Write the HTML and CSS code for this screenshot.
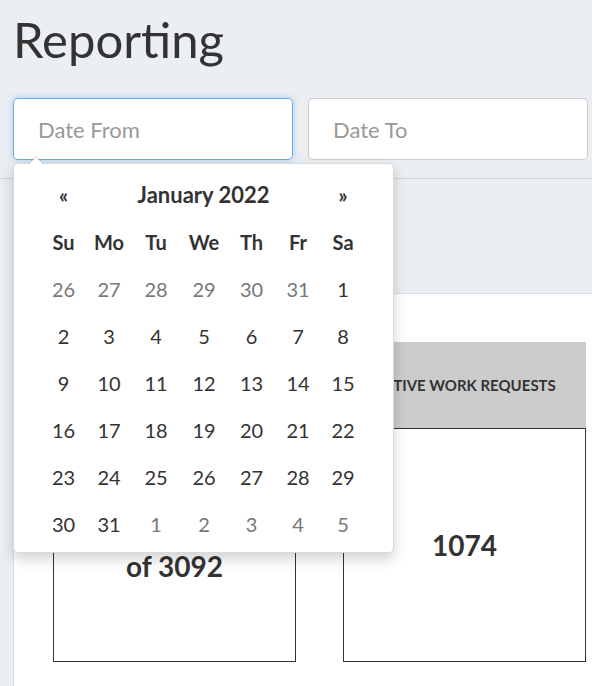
FILE: index.html
```html
<!DOCTYPE html>
<html lang="en">
<head>
  <meta charset="UTF-8">
  <meta name="viewport" content="width=device-width, initial-scale=1.0">
  <title>Reporting</title>
  <link rel="stylesheet" href="styles.css">
</head>
<body>
  <div class="top">
    <h1>Reporting</h1>

    <div class="date-row">
      <input type="text" class="date-input focused" placeholder="Date From" autofocus>
      <input type="text" class="date-input" placeholder="Date To">

      <div class="datepicker">
        <table class="cal">
          <colgroup>
            <col style="width:45px"><col style="width:46px"><col style="width:48px"><col style="width:48px">
            <col style="width:47px"><col style="width:46px"><col style="width:44px">
          </colgroup>
          <thead>
            <tr>
              <th class="nav">&laquo;</th>
              <th class="month" colspan="5">January 2022</th>
              <th class="nav">&raquo;</th>
            </tr>
            <tr class="dow">
              <th>Su</th><th>Mo</th><th>Tu</th><th>We</th><th>Th</th><th>Fr</th><th>Sa</th>
            </tr>
          </thead>
          <tbody id="cal-body"></tbody>
        </table>
      </div>
    </div>
  </div>

  <div class="rule"></div>

  <div class="panel">
    <div class="cards">
      <div class="card">
        <div class="card-head">COMPLETED</div>
        <div class="card-body">
          <div class="value two-line">2018<br>of 3092</div>
        </div>
      </div>
      <div class="card">
        <div class="card-head">ACTIVE WORK REQUESTS</div>
        <div class="card-body">
          <div class="value">1074</div>
        </div>
      </div>
    </div>
  </div>

  <script>
    // January 2022 starts on a Saturday; fill 6 weeks from Dec 26
    const body = document.getElementById('cal-body');
    const start = new Date(2021, 11, 26);
    for (let w = 0; w < 6; w++) {
      const row = document.createElement('tr');
      for (let d = 0; d < 7; d++) {
        const day = new Date(start);
        day.setDate(start.getDate() + w * 7 + d);
        const cell = document.createElement('td');
        cell.textContent = day.getDate();
        if (day.getMonth() !== 0) cell.className = 'other';
        row.appendChild(cell);
      }
      body.appendChild(row);
    }
  </script>
</body>
</html>
```

FILE: styles.css
```css
body {
  margin: 0;
  font-family: Lato, "Open Sans", sans-serif;
  background-color: #ebeef2;
  color: #333;
  overflow: hidden;
}
.top {
  padding: 11px 13px 0;
}
h1 {
  margin: 0;
  font-size: 49px;
  font-weight: 400;
  line-height: 57px;
  color: #333;
}
.date-row {
  position: relative;
  display: flex;
  gap: 15px;
  margin-top: 30px;
}
.date-input {
  width: 280px;
  height: 62px;
  box-sizing: border-box;
  padding: 0 24px;
  border: 1px solid #ccc;
  border-radius: 5px;
  background: #fff;
  font-family: Lato, sans-serif;
  font-size: 22px;
  color: #555;
  outline: none;
}
.date-input::placeholder {
  color: #999;
}
.date-input.focused {
  border-color: #66afe9;
  box-shadow: 0 0 6px rgba(102, 175, 233, 0.55);
}
.datepicker {
  position: absolute;
  top: 65px;
  left: 0;
  width: 381px;
  box-sizing: border-box;
  padding: 7px 28px 5px 27px;
  background: #fff;
  border: 1px solid rgba(0, 0, 0, 0.15);
  border-radius: 5px;
  box-shadow: 0 6px 14px rgba(0, 0, 0, 0.18);
  z-index: 10;
}
.datepicker::before {
  content: "";
  position: absolute;
  top: -8px;
  left: 14px;
  border-left: 8px solid transparent;
  border-right: 8px solid transparent;
  border-bottom: 8px solid rgba(0, 0, 0, 0.15);
}
.datepicker::after {
  content: "";
  position: absolute;
  top: -7px;
  left: 15px;
  border-left: 7px solid transparent;
  border-right: 7px solid transparent;
  border-bottom: 7px solid #fff;
}
.cal {
  table-layout: fixed;
  width: 324px;
  border-collapse: collapse;
  font-size: 20px;
}
.cal th,
.cal td {
  height: 47px;
  padding: 0;
  text-align: center;
  color: #333;
}
.cal th {
  font-weight: 700;
}
.cal .month {
  font-size: 22px;
}
.cal td.other {
  color: #777;
}
.rule {
  margin-top: 18px;
  border-top: 1px solid #cfd2d6;
}
.panel {
  margin: 114px 0 0 13px;
  padding: 48px 0 40px 39px;
  background: #fff;
  border-top: 1px solid #dcdfe3;
  border-left: 1px solid #dcdfe3;
}
.cards {
  display: flex;
  gap: 47px;
}
.card {
  width: 243px;
}
.card-head {
  height: 86px;
  display: flex;
  align-items: center;
  justify-content: center;
  background: #ccc;
  font-size: 15px;
  font-weight: 700;
  color: #333;
  white-space: nowrap;
}
.card-body {
  height: 232px;
  border: 1px solid #333;
  display: flex;
  align-items: center;
  justify-content: center;
}
.value {
  font-size: 28px;
  font-weight: 700;
  text-align: center;
}
.value.two-line {
  line-height: 42px;
}
```
